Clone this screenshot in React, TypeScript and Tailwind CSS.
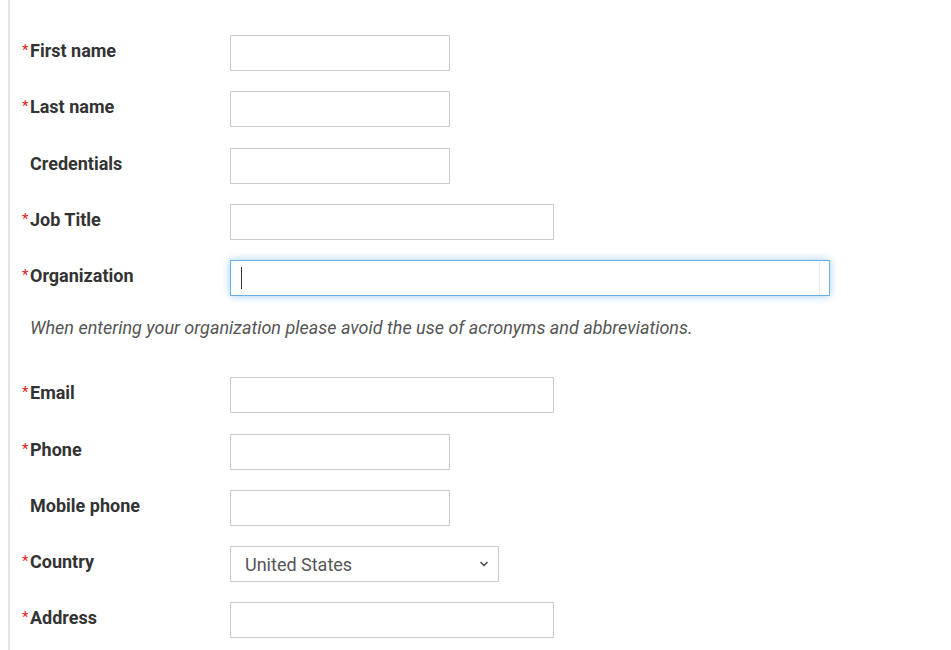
import { ChevronDown } from "lucide-react"

type Field = { label: string; required: boolean; width: string; focused?: boolean }

function Label({ label, required }: { label: string; required: boolean }) {
  return (
    <div className="w-[208px] shrink-0 flex items-start pt-[4px] text-[18px] leading-6 font-bold text-[#333]">
      <span className="w-2 pt-[3px] text-[15px] leading-4 text-[#e02020] font-normal">{required ? "*" : ""}</span>
      <span>{label}</span>
    </div>
  )
}

function Row({ field }: { field: Field }) {
  return (
    <div className="flex items-start mb-[20.25px]">
      <Label label={field.label} required={field.required} />
      {field.focused ? (
        <div className={`${field.width} h-9 border border-[#66afe9] bg-white shadow-[0_0_8px_rgba(102,175,233,0.6)] flex items-center pl-[10px] relative`}>
          <span className="w-px h-[22px] bg-[#333]" />
          <span className="absolute right-[9px] top-0 bottom-0 w-px bg-[#e3edf8]" />
        </div>
      ) : (
        <input type="text" className={`${field.width} h-9 border border-[#ccc] bg-white outline-none`} />
      )}
    </div>
  )
}

const top: Field[] = [
  { label: "First name", required: true, width: "w-[220px]" },
  { label: "Last name", required: true, width: "w-[220px]" },
  { label: "Credentials", required: false, width: "w-[220px]" },
  { label: "Job Title", required: true, width: "w-[324px]" },
  { label: "Organization", required: true, width: "w-[600px]", focused: true },
]

const bottom: Field[] = [
  { label: "Email", required: true, width: "w-[324px]" },
  { label: "Phone", required: true, width: "w-[220px]" },
  { label: "Mobile phone", required: false, width: "w-[220px]" },
]

export default function App() {
  return (
    <div className="w-[951px] h-[650px] bg-white overflow-hidden font-['Roboto',sans-serif]">
      <div className="ml-2 h-full border-l-2 border-[#e3e3e3] pl-3 pt-[35px]">
        {top.map(f => <Row key={f.label} field={f} />)}

        <p className="pl-2 text-[18px] leading-6 italic text-[#555] mb-[37px]">
          When entering your organization please avoid the use of acronyms and abbreviations.
        </p>

        {bottom.map(f => <Row key={f.label} field={f} />)}

        <div className="flex items-start mb-[20.25px]">
          <Label label="Country" required />
          <div className="w-[269px] h-9 border border-[#ccc] bg-white flex items-center justify-between pl-[14px] pr-[8px] text-[18px] text-[#555]">
            <span>United States</span>
            <ChevronDown className="w-3 h-3 text-[#555]" strokeWidth={3.5} />
          </div>
        </div>

        <Row field={{ label: "Address", required: true, width: "w-[324px]" }} />
      </div>
    </div>
  )
}
